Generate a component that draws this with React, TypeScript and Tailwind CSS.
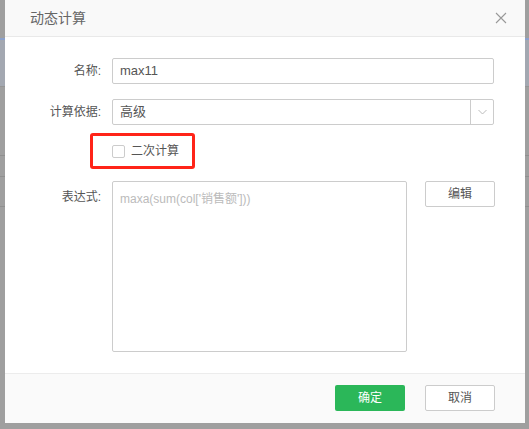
import React from "react";

const font = { fontFamily: '"Liberation Sans", "Noto Sans CJK SC", sans-serif' };

export default function App() {
  return (
    <div className="relative w-[529px] h-[429px] overflow-hidden bg-[#9f9f9f]" style={font}>
      {/* dimmed page behind the dialog */}
      <div className="flex flex-col">
        <div className="h-[38px]" />
        <div className="h-[2px] bg-[#8aa0cc]" />
        <div className="h-[46px] bg-[#a3a8b1]" />
        <div className="h-[69px] border-t border-[#959595]" />
        <div className="h-[21px] border-t border-[#8f8f8f]" />
        <div className="h-[30px] border-t border-[#8f8f8f]" />
        <div className="h-[30px] border-t border-[#8f8f8f]" />
      </div>

      {/* dialog */}
      <div className="absolute left-[5px] top-0 w-[520px] h-[423px] bg-white flex flex-col">
        {/* header */}
        <div className="h-[37px] shrink-0 bg-[#f9f9f9] border-b border-[#e9e9e9] flex items-center justify-between pl-[25px] pr-[18px]">
          <span className="text-[14px] text-[#666]">动态计算</span>
          <svg width="12" height="12" viewBox="0 0 12 12" className="block">
            <path d="M1 1 L11 11 M11 1 L1 11" stroke="#999" strokeWidth="1.1" fill="none" />
          </svg>
        </div>

        {/* body */}
        <div className="flex-1 flex flex-col pt-[21px] text-[12px] text-[#555]">
          {/* name */}
          <div className="flex items-center h-[26px]">
            <div className="w-[96px] text-right text-[#555]">名称:</div>
            <div className="ml-[11px] w-[382px] h-[26px] border border-[#cccccc] rounded-[2px] flex items-center px-[7px] text-[13px] text-[#555]">
              max11
            </div>
          </div>

          {/* select */}
          <div className="flex items-center h-[26px] mt-[15px]">
            <div className="w-[96px] text-right text-[#555]">计算依据:</div>
            <div className="ml-[11px] w-[382px] h-[26px] border border-[#cccccc] rounded-[2px] flex items-stretch">
              <div className="flex-1 flex items-center px-[7px] text-[13px] text-[#555]">高级</div>
              <div className="w-[23px] border-l border-[#cccccc] flex items-center justify-center">
                <svg width="9" height="6" viewBox="0 0 9 6" className="block">
                  <path d="M0.5 1 L4.5 5 L8.5 1" stroke="#bbbbbb" strokeWidth="1" fill="none" />
                </svg>
              </div>
            </div>
          </div>

          {/* checkbox */}
          <div className="relative flex items-center h-[36px] mt-[8px] pl-[107px]">
            <div className="w-[13px] h-[13px] border border-[#cccccc] rounded-[2px] bg-white" />
            <span className="ml-[6px] text-[12px] text-[#555]">二次计算</span>
            <div className="absolute left-[85px] top-0 w-[105px] h-[36px] border-[3px] border-[#ff2418] rounded-[3px]" />
          </div>

          {/* expression */}
          <div className="flex items-start mt-[12px]">
            <div className="w-[96px] text-right text-[#555] pt-[7px]">表达式:</div>
            <div className="ml-[11px] w-[295px] h-[171px] border border-[#cccccc] rounded-[2px] px-[7px] pt-[8px] text-[12px] text-[#bbbbbb]">
              maxa(sum(col['销售额']))
            </div>
            <div className="ml-[18px] w-[70px] h-[26px] border border-[#cccccc] rounded-[2px] flex items-center justify-center text-[12px] text-[#555]">
              编辑
            </div>
          </div>
        </div>

        {/* footer */}
        <div className="h-[50px] shrink-0 bg-[#fafafa] border-t border-[#ececec] flex items-start justify-end pt-[11px] pr-[30px] gap-[20px]">
          <div className="w-[70px] h-[26px] rounded-[2px] bg-[#2bb759] flex items-center justify-center text-[12px] text-white">
            确定
          </div>
          <div className="w-[70px] h-[26px] rounded-[2px] border border-[#cccccc] bg-white flex items-center justify-center text-[12px] text-[#555]">
            取消
          </div>
        </div>
      </div>
    </div>
  );
}
